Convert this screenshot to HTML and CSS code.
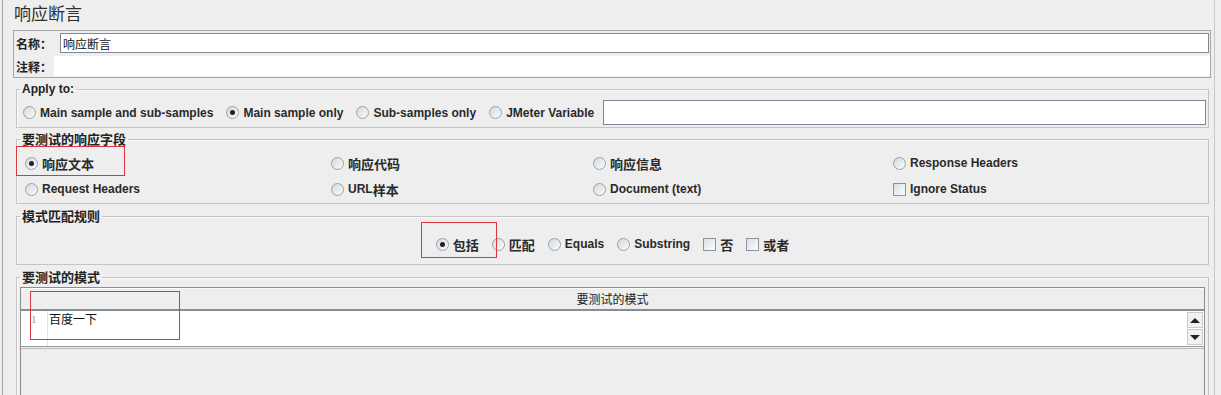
FILE: index.html
```html
<!DOCTYPE html>
<html lang="zh-CN">
<head>
    <meta charset="UTF-8">
    <title>响应断言</title>
    <link rel="stylesheet" href="styles.css">
</head>
<body>

    <div class="panel">

        <h1 class="title">响应断言</h1>

        <!-- Name / comments -->
        <div class="name-box">
            <div class="name-row">
                <label>名称：</label>
                <input class="name-input" value="响应断言">
            </div>
            <div class="name-row comment-row">
                <label>注释：</label>
                <div class="comment-field"></div>
            </div>
        </div>

        <!-- Apply to -->
        <fieldset class="group apply">
            <legend>Apply to:</legend>
            <div class="apply-row">
                <label class="opt"><span class="radio"></span>Main sample and sub-samples</label>
                <label class="opt"><span class="radio on"></span>Main sample only</label>
                <label class="opt"><span class="radio"></span>Sub-samples only</label>
                <label class="opt"><span class="radio"></span>JMeter Variable</label>
                <input class="var-field">
            </div>
        </fieldset>

        <!-- Response field to test -->
        <fieldset class="group fields">
            <legend class="zh">要测试的响应字段</legend>
            <div class="field-grid">
                <label class="opt"><span class="radio on"></span><span class="zh">响应文本</span></label>
                <label class="opt"><span class="radio"></span><span class="zh">响应代码</span></label>
                <label class="opt"><span class="radio"></span><span class="zh">响应信息</span></label>
                <label class="opt"><span class="radio"></span>Response Headers</label>
                <label class="opt"><span class="radio"></span>Request Headers</label>
                <label class="opt"><span class="radio"></span>URL<span class="zh">样本</span></label>
                <label class="opt"><span class="radio"></span>Document (text)</label>
                <label class="opt"><span class="check"></span>Ignore Status</label>
            </div>
        </fieldset>

        <!-- Pattern matching rules -->
        <fieldset class="group rules">
            <legend class="zh">模式匹配规则</legend>
            <div class="rule-row">
                <label class="opt"><span class="radio on"></span><span class="zh">包括</span></label>
                <label class="opt"><span class="radio"></span><span class="zh">匹配</span></label>
                <label class="opt"><span class="radio"></span>Equals</label>
                <label class="opt"><span class="radio"></span>Substring</label>
                <label class="opt"><span class="check"></span><span class="zh">否</span></label>
                <label class="opt"><span class="check"></span><span class="zh">或者</span></label>
            </div>
        </fieldset>

        <!-- Patterns to test -->
        <fieldset class="group patterns">
            <legend class="zh">要测试的模式</legend>
            <div class="pattern-table">
                <div class="table-head">要测试的模式</div>
                <div class="editor">
                    <div class="gutter">1</div>
                    <div class="code">百度一下</div>
                    <div class="scrollbar">
                        <span class="scroll-btn"><i class="arrow-up"></i></span>
                        <span class="scroll-btn"><i class="arrow-down"></i></span>
                    </div>
                </div>
                <div class="table-rest"></div>
            </div>
        </fieldset>

        <!-- Red annotation boxes -->
        <div class="mark mark-field"></div>
        <div class="mark mark-rule"></div>
        <div class="mark mark-pattern"></div>

    </div>

</body>
</html>
```

FILE: styles.css
```css
* {
    box-sizing: border-box;
}

body {
    margin: 0;
    height: 395px;
    overflow: hidden;
    background: #eeeeee;
    color: #222;
    font-family: "Liberation Sans", "Noto Sans CJK SC", sans-serif;
    font-size: 12px;
}

.zh {
    font-family: "Noto Sans CJK SC", sans-serif;
    font-size: 13px;
}

.panel {
    position: relative;
    height: 395px;
    margin-left: 2px;
    width: 1213px;
    border-left: 1px solid #a3a3a3;
    border-right: 1px solid #c9c9c9;
}

.title {
    margin: 0;
    height: 30px;
    padding: 1px 0 0 11px;
    font-family: "Noto Sans CJK SC", sans-serif;
    font-size: 17px;
    font-weight: normal;
    line-height: 24px;
    color: #2e2e2e;
}

/* Name / comments */
.name-box {
    margin-left: 10px;
    width: 1198px;
    border: 1px solid #a8a8a8;
}

.name-row {
    display: flex;
    align-items: center;
    height: 24px;
}

.name-row label {
    width: 46px;
    padding-left: 2px;
    font-family: "Noto Sans CJK SC", sans-serif;
    font-weight: bold;
    font-size: 12px;
}

.name-input {
    flex: 1;
    height: 20px;
    margin: 0 1px 0 0;
    padding: 0 2px;
    border: 1px solid #7f8a96;
    background: white;
    font-family: "Noto Sans CJK SC", sans-serif;
    font-size: 12px;
    color: #111;
    outline: none;
}

.comment-row {
    height: 22px;
}

.comment-row label {
    width: 40px;
}

.comment-field {
    flex: 1;
    height: 20px;
    background: white;
}

/* Titled groups */
.group {
    margin: 4px 0 0 13px;
    width: 1193px;
    min-width: 0;
    padding: 0;
    border: 1px solid #c4c4c4;
    box-shadow: inset 1px 1px 0 #fbfbfb;
}

.group legend {
    margin-left: 3px;
    padding: 0 2px;
    font-weight: bold;
    line-height: 14px;
}

.apply {
    margin-top: 4px;
}

.rules,
.patterns {
    margin-top: 5px;
}

.opt {
    display: flex;
    align-items: center;
    font-weight: bold;
    white-space: nowrap;
    color: #2a2a2a;
}

.radio {
    position: relative;
    flex: none;
    width: 13px;
    height: 13px;
    margin-right: 4px;
    border: 1px solid #98a1aa;
    border-radius: 50%;
    background: linear-gradient(135deg, #d3d8dd, #fbfcfd);
}

.radio.on::after {
    content: "";
    position: absolute;
    left: 3px;
    top: 3px;
    width: 5px;
    height: 5px;
    border-radius: 50%;
    background: #222;
}

.check {
    flex: none;
    width: 13px;
    height: 13px;
    margin-right: 4px;
    border: 1px solid #8a949e;
    background: linear-gradient(135deg, #d9dee3, #fdfdfd);
}

/* Apply to */
.apply-row {
    display: flex;
    align-items: center;
    gap: 13px;
    padding: 4px 2px 2px 6px;
}

.var-field {
    flex: 1;
    height: 25px;
    margin-left: -4px;
    border: 1px solid #7a8794;
    background: white;
    outline: none;
}

/* Response fields */
.field-grid {
    display: grid;
    grid-template-columns: 306px 262px 300px 1fr;
    grid-auto-rows: 26px;
    align-items: center;
    padding: 4px 0 1px 8px;
}

/* Matching rules */
.rule-row {
    display: flex;
    justify-content: center;
    align-items: center;
    gap: 13px;
    height: 41px;
    padding: 8px 0 7px;
}

/* Patterns table */
.patterns {
    height: 140px;
}

.pattern-table {
    margin: 3px 3px 0;
    border: 1px solid #8d8d8d;
    border-bottom: none;
}

.table-head {
    height: 23px;
    border-bottom: 2px solid #858c95;
    box-shadow: inset 0 1px 0 #fafafa;
    text-align: center;
    line-height: 21px;
    font-family: "Noto Sans CJK SC", sans-serif;
    font-size: 12px;
    color: #222;
}

.editor {
    display: flex;
    height: 36px;
    background: white;
    border-bottom: 1px solid #9a9a9a;
}

.gutter {
    width: 27px;
    padding: 2px 0 0 10px;
    border-right: 1px solid #e4e4e4;
    font-family: "Liberation Serif", serif;
    font-size: 11px;
    color: #9a9a9a;
}

.code {
    flex: 1;
    padding: 0 0 0 1px;
    font-family: "Noto Sans CJK SC", sans-serif;
    font-size: 12px;
    line-height: 16px;
    color: #111;
}

.scrollbar {
    display: flex;
    flex-direction: column;
    gap: 1px;
    width: 16px;
    margin: 1px 1px 0 0;
}

.scroll-btn {
    display: flex;
    justify-content: center;
    align-items: center;
    height: 16px;
    border: 1px solid #c6cbd0;
    background: #f2f2f2;
}

.arrow-up,
.arrow-down {
    width: 0;
    height: 0;
    border-left: 5px solid transparent;
    border-right: 5px solid transparent;
}

.arrow-up { border-bottom: 5px solid #222; }
.arrow-down { border-top: 5px solid #222; }

.table-rest {
    height: 80px;
    margin-top: 1px;
    border-top: 1px solid #b8b8b8;
}

/* Annotation boxes */
.mark {
    position: absolute;
    z-index: 2;
    border: 1px solid #d9363e;
}

.mark-field { left: 13px; top: 146px; width: 109px; height: 30px; }
.mark-rule { left: 418px; top: 222px; width: 76px; height: 36px; }
.mark-pattern { left: 27px; top: 291px; width: 150px; height: 49px; }
```
